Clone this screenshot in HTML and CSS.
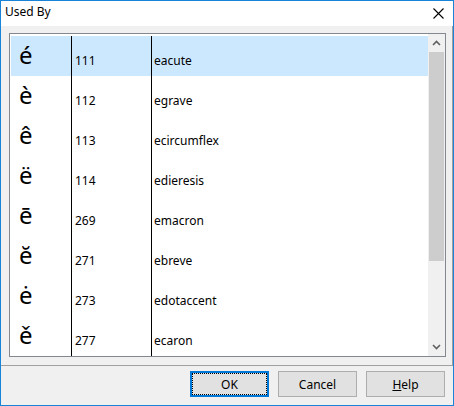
FILE: index.html
```html
<!DOCTYPE html>
<html>
<head>
<meta charset="utf-8">
<link rel="stylesheet" href="styles.css">
</head>
<body>
<div class="window">
  <div class="titlebar">
    <span class="title">Used By</span>
    <svg class="close" width="11" height="11" viewBox="0 0 11 11"><path d="M0.5 0.5 L10.5 10.5 M10.5 0.5 L0.5 10.5" stroke="#000" stroke-width="1.1" fill="none"/></svg>
  </div>
  <div class="panel">
    <div class="list">
      <div class="rows">
        <div class="row selected"><div class="glyph">é</div><div class="code">111</div><div class="name">eacute</div></div>
        <div class="row"><div class="glyph">è</div><div class="code">112</div><div class="name">egrave</div></div>
        <div class="row"><div class="glyph">ê</div><div class="code">113</div><div class="name">ecircumflex</div></div>
        <div class="row"><div class="glyph">ë</div><div class="code">114</div><div class="name">edieresis</div></div>
        <div class="row"><div class="glyph">ē</div><div class="code">269</div><div class="name">emacron</div></div>
        <div class="row"><div class="glyph">ĕ</div><div class="code">271</div><div class="name">ebreve</div></div>
        <div class="row"><div class="glyph">ė</div><div class="code">273</div><div class="name">edotaccent</div></div>
        <div class="row"><div class="glyph">ě</div><div class="code">277</div><div class="name">ecaron</div></div>
      </div>
      <div class="scrollbar">
        <div class="arrow"><svg width="9" height="6" viewBox="0 0 9 6"><path d="M1 5 L4.5 1.5 L8 5" stroke="#606060" stroke-width="1.6" fill="none"/></svg></div>
        <div class="thumb"></div>
        <div class="track"></div>
        <div class="arrow"><svg width="9" height="6" viewBox="0 0 9 6"><path d="M1 1 L4.5 4.5 L8 1" stroke="#606060" stroke-width="1.6" fill="none"/></svg></div>
      </div>
    </div>
  </div>
  <div class="footer">
    <button class="btn default">OK</button>
    <button class="btn">Cancel</button>
    <button class="btn"><u>H</u>elp</button>
  </div>
</div>
</body>
</html>
```

FILE: styles.css
```css
* { box-sizing: border-box; }
html, body { margin: 0; padding: 0; }
body {
  font-family: "Noto Sans", "Open Sans", sans-serif;
  font-size: 12px;
  color: #000;
}
.window {
  width: 454px;
  height: 406px;
  border: 1px solid #1883d7;
  background: #f0f0f0;
  display: flex;
  flex-direction: column;
}
.titlebar {
  height: 25px;
  background: #fff;
  display: flex;
  align-items: center;
  justify-content: space-between;
  padding-left: 4px;
  padding-right: 9px;
}
.title {
  font-size: 12px;
  line-height: 22px;
  padding-bottom: 3px;
}
.close { display: block; }
.panel {
  height: 340px;
  padding: 7px 6px 0 8px;
  border-right: 1px solid #a0a0a0;
  border-bottom: 1px solid #a0a0a0;
}
.list {
  width: 437px;
  height: 324px;
  border: 1px solid #828790;
  background: #fff;
  display: flex;
}
.rows {
  width: 418px;
  padding: 2px 0 0 1px;
  overflow: hidden;
}
.row {
  display: grid;
  grid-template-columns: 61px 80px 1fr;
  height: 40px;
}
.row.selected { background: #cce8ff; }
.glyph {
  border-right: 1px solid #000;
  font-size: 24px;
  line-height: 38px;
  padding-left: 8px;
}
.code {
  border-right: 1px solid #000;
  padding: 9px 0 0 3px;
  line-height: 31px;
}
.name {
  padding: 9px 0 0 2px;
  line-height: 31px;
}
.scrollbar {
  width: 17px;
  background: #f0f0f0;
  display: flex;
  flex-direction: column;
}
.arrow {
  height: 18px;
  display: flex;
  align-items: center;
  justify-content: center;
}
.arrow svg { display: block; }
.thumb {
  height: 209px;
  margin: 0 1px;
  background: #cdcdcd;
}
.track { flex: 1; }
.footer {
  flex: 1;
  display: flex;
  justify-content: flex-end;
  align-items: flex-start;
  gap: 9px;
  padding: 5px 8px 0 0;
}
.btn {
  width: 79px;
  height: 26px;
  border: 1px solid #adadad;
  background: #e1e1e1;
  font-family: "Noto Sans", "Open Sans", sans-serif;
  font-size: 12px;
  color: #000;
  padding: 0;
  margin: 0;
}
.btn.default {
  border: 2px solid #0078d7;
  outline: 1px dotted #000;
  outline-offset: -3px;
}
```
